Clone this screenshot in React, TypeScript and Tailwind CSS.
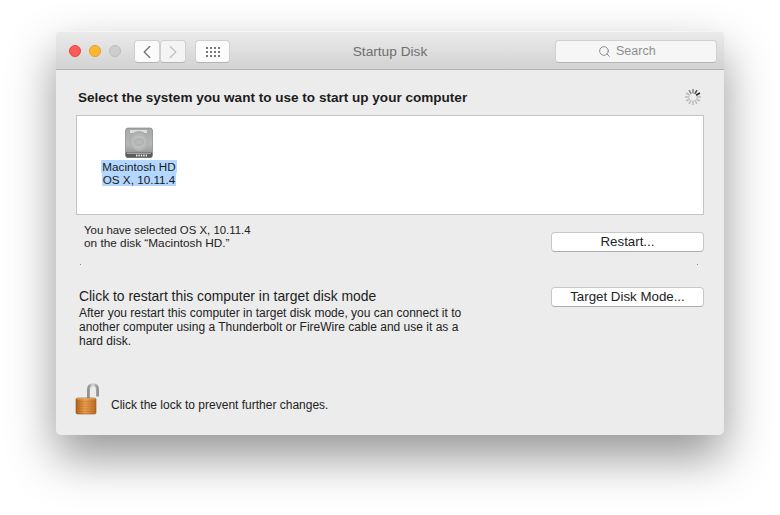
import { ChevronLeft, ChevronRight, Search } from "lucide-react";

const spinnerBars = [0, 30, 60, 90, 120, 150, 180, 210, 240, 270, 300, 330];

const DiskIcon = () => (
  <svg width="32" height="32" viewBox="0 0 32 32">
    <defs>
      <linearGradient id="diskBody" x1="0" y1="0" x2="0" y2="1">
        <stop offset="0" stopColor="#a6a8a6" />
        <stop offset="0.55" stopColor="#b6b8b7" />
        <stop offset="1" stopColor="#878a88" />
      </linearGradient>
      <radialGradient id="platter" cx="0.5" cy="0.55" r="0.6">
        <stop offset="0" stopColor="#d2d4d2" />
        <stop offset="1" stopColor="#a2a5a3" />
      </radialGradient>
    </defs>
    <rect x="2.5" y="1" width="27" height="29.5" rx="2.5" fill="url(#diskBody)" stroke="#777977" strokeWidth="0.6" />
    <rect x="7" y="3" width="17" height="3" fill="#e6e8e6" opacity="0.85" />
    <circle cx="16" cy="14" r="10" fill="url(#platter)" />
    <ellipse cx="16" cy="15" rx="4.5" ry="3.4" fill="#b6b9b7" stroke="#8f9290" strokeWidth="0.4" />
    <rect x="2.8" y="25" width="26.4" height="5.5" rx="1.5" fill="#5a5d5b" />
    <rect x="4" y="25.6" width="24" height="1.2" fill="#b4b7b5" />
    <g fill="#f2f3f2">
      <rect x="13" y="27.6" width="1.4" height="1.8" />
      <rect x="15.4" y="27.6" width="1.4" height="1.8" />
      <rect x="17.8" y="27.6" width="1.4" height="1.8" />
      <rect x="20.2" y="27.6" width="1.4" height="1.8" />
      <rect x="22.6" y="27.6" width="1.4" height="1.8" />
    </g>
  </svg>
);

const LockIcon = () => (
  <svg width="26" height="33" viewBox="0 0 26 33">
    <defs>
      <linearGradient id="brass" x1="0" y1="0" x2="1" y2="0">
        <stop offset="0" stopColor="#b5601a" />
        <stop offset="0.45" stopColor="#e8a050" />
        <stop offset="1" stopColor="#b96a22" />
      </linearGradient>
      <linearGradient id="shackle" x1="0" y1="0" x2="1" y2="0">
        <stop offset="0" stopColor="#8f9499" />
        <stop offset="0.5" stopColor="#d7dade" />
        <stop offset="1" stopColor="#8e9398" />
      </linearGradient>
    </defs>
    <path d="M13.5 16V7C13.5 3.6 15.4 1.7 18 1.7S22.5 3.6 22.5 7V13.5" fill="none" stroke="url(#shackle)" strokeWidth="3" />
    <rect x="1" y="15" width="20" height="16" rx="1.5" fill="url(#brass)" stroke="#9b5518" strokeWidth="0.6" />
    <path d="M1.5 15.8H20.5" stroke="#f0bb78" strokeWidth="0.8" />
    <g stroke="#a75c1c" strokeWidth="0.5" opacity="0.55">
      <path d="M1.5 18.5H20.5M1.5 21H20.5M1.5 23.5H20.5M1.5 26H20.5M1.5 28.5H20.5" />
    </g>
  </svg>
);

const Spinner = () => (
  <svg width="18" height="18" viewBox="0 0 18 18">
    {spinnerBars.map((deg, i) => (
      <rect
        key={deg}
        x="8.2"
        y="1"
        width="1.6"
        height="4.4"
        fill={i === 2 ? "#222" : i === 1 ? "#555" : i === 0 || i === 11 ? "#8a8a8a" : "#bcbcbc"}
        transform={`rotate(${deg} 9 9)`}
      />
    ))}
  </svg>
);

const PushButton = ({ label }: { label: string }) => (
  <button className="w-[153px] h-[20px] shrink-0 rounded-[4px] bg-white border border-[#c8c8c8] border-b-[#acacac] text-[13.3px] leading-[18px] text-[#222]">
    {label}
  </button>
);

export default function App() {
  return (
    <div className="w-[780px] h-[515px] bg-white pl-[56px] pt-[31px] font-['Liberation_Sans',Arial,sans-serif] overflow-hidden">
      <div className="w-[668px] h-[404px] rounded-[5px] bg-[#ececec] overflow-hidden shadow-[0_22px_48px_rgba(0,0,0,0.42)] flex flex-col">
        {/* toolbar */}
        <div className="h-[39px] shrink-0 flex items-center px-[13px] bg-gradient-to-b from-[#ebebeb] to-[#d2d2d2] border-b border-[#b1b1b1] border-t border-t-[#f5f5f5]">
          <div className="flex items-center gap-[8px]">
            <span className="w-[12px] h-[12px] rounded-full bg-[#fc5b57] border border-[#e2463f]" />
            <span className="w-[12px] h-[12px] rounded-full bg-[#fdb82e] border border-[#de9f34]" />
            <span className="w-[12px] h-[12px] rounded-full bg-[#cdcdcd] border border-[#bdbdbd]" />
          </div>
          <div className="flex ml-[13px] mt-[2px]">
            <div className="w-[26px] h-[23px] rounded-[4px] bg-[#fbfbfb] border border-[#d0d0d0] border-b-[#b5b5b5] flex items-center justify-center">
              <ChevronLeft size={22} strokeWidth={1.5} className="text-[#777]" />
            </div>
            <div className="w-[26px] h-[23px] rounded-[4px] bg-[#f4f4f4] border border-[#d0d0d0] border-b-[#b5b5b5] flex items-center justify-center">
              <ChevronRight size={22} strokeWidth={1.5} className="text-[#c4c4c4]" />
            </div>
          </div>
          <div className="w-[35px] h-[23px] ml-[9px] mt-[2px] rounded-[4px] bg-[#fbfbfb] border border-[#d0d0d0] border-b-[#b5b5b5] flex items-center justify-center">
            <div className="grid grid-cols-4 gap-[2px]">
              {Array.from({ length: 12 }).map((_, i) => (
                <span key={i} className="w-[2px] h-[2px] bg-[#777]" />
              ))}
            </div>
          </div>
          <div className="flex-1 text-center text-[13.7px] text-[#6e6e6e] mt-[3px] mr-[5px]">Startup Disk</div>
          <div className="w-[162px] h-[23px] mr-[-6px] mt-[2px] rounded-[4px] bg-[#f6f6f6] border border-[#d0d0d0] border-b-[#b5b5b5] flex items-center pl-[42px] gap-[5px] text-[12.5px] text-[#8e8e8e]">
            <Search size={13} strokeWidth={1.5} className="text-[#777]" />
            <span>Search</span>
          </div>
        </div>

        {/* body */}
        <div className="flex-1 flex flex-col pl-[20px] pr-[20px]">
          <div className="h-[45px] flex items-center justify-between pl-[2px] pr-[1px] pt-[11px]">
            <span className="text-[13.55px] font-bold text-[#1c1c1c]">Select the system you want to use to start up your computer</span>
            <span className="mb-[2px] mr-[1px]">
              <Spinner />
            </span>
          </div>
          <div className="h-[100px] shrink-0 bg-white border border-[#c4c4c4] pl-[23px] pt-[11px]">
            <div className="w-[78px] flex flex-col items-center">
              <DiskIcon />
              <div className="mt-[1px] flex flex-col items-center text-[11.7px] leading-[13px] text-[#1a1a1a]">
                <span className="bg-[#b3d7ff] px-[1px]">Macintosh HD</span>
                <span className="bg-[#b3d7ff] px-[1px]">OS X, 10.11.4</span>
              </div>
            </div>
          </div>

          <div className="flex justify-between mt-[9px]">
            <p className="pl-[8px] text-[11.4px] leading-[13px] text-[#222]">
              You have selected OS X, 10.11.4
              <br />
              <span className="text-[11.8px]">on the disk “Macintosh HD.”</span>
            </p>
            <div className="flex pt-[8px]">
              <PushButton label="Restart..." />
            </div>
          </div>
          <div className="flex justify-between px-[4px] mt-[12px] h-[1px] pr-[6px]">
            <span className="w-[1px] h-[1px] bg-[#8a8a8a]" />
            <span className="w-[1px] h-[1px] bg-[#8a8a8a]" />
          </div>

          <div className="flex justify-between mt-[22px]">
            <div className="pl-[3px]">
              <h2 className="text-[13.9px] leading-[18px] font-normal text-[#1c1c1c]">Click to restart this computer in target disk mode</h2>
              <p className="w-[386px] mt-[1px] text-[12px] leading-[14px] text-[#222]">
                After you restart this computer in target disk mode, you can connect it to another computer using a Thunderbolt or FireWire cable and use it as a hard disk.
              </p>
            </div>
            <PushButton label="Target Disk Mode..." />
          </div>

          <div className="flex items-end gap-[10px] mt-[35px] -ml-[1px]">
            <LockIcon />
            <span className="text-[12px] leading-[14px] text-[#222] pb-[4px]">Click the lock to prevent further changes.</span>
          </div>
        </div>
      </div>
    </div>
  );
}
